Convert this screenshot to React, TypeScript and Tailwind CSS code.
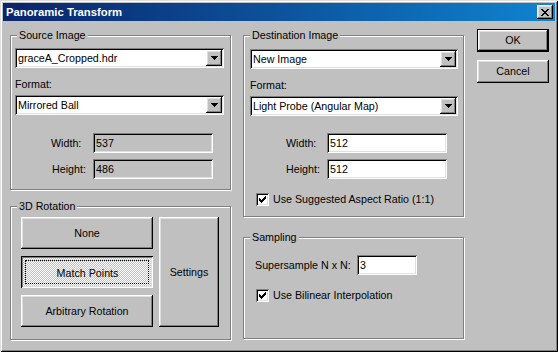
import React from "react";

const raised =
  "shadow-[inset_-1px_-1px_0_#000,inset_1px_1px_0_#fff,inset_-2px_-2px_0_#808080,inset_2px_2px_0_#dfdfdf]";
const pressed =
  "shadow-[inset_1px_1px_0_#000,inset_-1px_-1px_0_#fff,inset_2px_2px_0_#808080,inset_-2px_-2px_0_#dfdfdf]";
const sunken =
  "shadow-[inset_1px_1px_0_#808080,inset_-1px_-1px_0_#fff,inset_2px_2px_0_#000,inset_-2px_-2px_0_#dfdfdf]";

function Group({ label, className, children }: { label: string; className: string; children: React.ReactNode }) {
  return (
    <div className={`relative border border-[#808080] shadow-[1px_1px_0_#fff,inset_1px_1px_0_#fff] ${className}`}>
      <span className="absolute left-[6px] top-[-7px] bg-[#c0c0c0] px-[2px] leading-[13px]">{label}</span>
      {children}
    </div>
  );
}

function Combo({ value, width }: { value: string; width: string }) {
  return (
    <div className={`flex h-[20px] items-center bg-white p-[2px] ${sunken} ${width}`}>
      <span className="flex-1 pl-[1px] leading-[13px]">{value}</span>
      <div className={`flex h-[16px] w-[16px] items-center justify-center bg-[#c0c0c0] ${raised}`}>
        <svg width="7" height="4" viewBox="0 0 7 4" shapeRendering="crispEdges">
          <path d="M0 0h7v1h-7z M1 1h5v1h-5z M2 2h3v1h-3z M3 3h1v1h-1z" fill="#000" />
        </svg>
      </div>
    </div>
  );
}

function Field({ value, width, readOnly }: { value: string; width: string; readOnly?: boolean }) {
  return (
    <div className={`flex h-[20px] items-center pl-[3px] leading-[13px] ${sunken} ${width} ${readOnly ? "bg-[#c0c0c0]" : "bg-white"}`}>
      {value}
    </div>
  );
}

function Check({ label }: { label: string }) {
  return (
    <div className="flex items-center gap-[4px]">
      <div className={`flex h-[13px] w-[13px] items-center justify-center bg-white ${sunken}`}>
        <svg width="7" height="7" viewBox="0 0 7 7" shapeRendering="crispEdges">
          <path
            d="M6 0h1v1h-1z M5 1h2v1h-2z M0 2h1v1h-1z M4 2h3v1h-3z M0 3h2v1h-2z M3 3h3v1h-3z M0 4h5v1h-5z M1 5h3v1h-3z M2 6h1v1h-1z"
            fill="#000"
          />
        </svg>
      </div>
      <span className="leading-[13px]">{label}</span>
    </div>
  );
}

function Btn({ children, className }: { children: React.ReactNode; className: string }) {
  return <div className={`flex items-center justify-center bg-[#c0c0c0] ${raised} ${className}`}>{children}</div>;
}

export default function App() {
  return (
    <div className="h-[352px] w-[558px] bg-[#c0c0c0] p-[3px] font-['Liberation_Sans',Arial,sans-serif] text-[10.7px] text-black shadow-[inset_1px_1px_0_#dfdfdf,inset_-1px_-1px_0_#000,inset_2px_2px_0_#fff,inset_-2px_-2px_0_#808080]">
      <div className="flex h-[18px] items-center justify-between bg-gradient-to-r from-[#0a246a] to-[#1084d0] pl-[3px] pr-[2px]">
        <span className="text-[11.3px] font-bold leading-[13px] text-white">Panoramic Transform</span>
        <div className={`flex h-[14px] w-[16px] items-center justify-center bg-[#c0c0c0] ${raised}`}>
          <svg width="8" height="7" viewBox="0 0 8 7" shapeRendering="crispEdges">
            <path
              d="M0 0h2v1h-2z M6 0h2v1h-2z M1 1h2v1h-2z M5 1h2v1h-2z M2 2h4v1h-4z M3 3h2v1h-2z M2 4h4v1h-4z M1 5h2v1h-2z M5 5h2v1h-2z M0 6h2v1h-2z M6 6h2v1h-2z"
              fill="#000"
            />
          </svg>
        </div>
      </div>

      <div className="flex pl-[7px] pt-[14px]">
        {/* left column */}
        <div className="flex w-[221px] flex-col">
          <Group label="Source Image" className="h-[155px] pl-[4px] pt-[12px]">
            <Combo value="graceA_Cropped.hdr" width="w-[209px]" />
            <div className="mt-[10px] leading-[13px]">Format:</div>
            <div className="mt-[4px]">
              <Combo value="Mirrored Ball" width="w-[209px]" />
            </div>
            <div className="mt-[18px] flex items-center pl-[36px]">
              <span className="w-[42px]">Width:</span>
              <Field value="537" width="w-[120px]" readOnly />
            </div>
            <div className="mt-[6px] flex items-center pl-[37px]">
              <span className="w-[41px]">Height:</span>
              <Field value="486" width="w-[120px]" readOnly />
            </div>
          </Group>

          <Group label="3D Rotation" className="mt-[16px] flex h-[134px] gap-[6px] pl-[10px] pt-[10px]">
            <div className="flex flex-col gap-[7px]">
              <Btn className="h-[32px] w-[132px]">None</Btn>
              <div
                className={`relative flex h-[32px] w-[132px] items-center justify-center bg-[repeating-conic-gradient(#fff_0_25%,#c0c0c0_0_50%)] bg-[length:2px_2px] pt-[2px] pl-[1px] ${pressed}`}
              >
                <span className="bg-transparent">Match Points</span>
                <div className="absolute inset-[4px] border border-dotted border-black" />
              </div>
              <Btn className="h-[32px] w-[132px]">Arbitrary Rotation</Btn>
            </div>
            <Btn className="h-[110px] w-[60px]">Settings</Btn>
          </Group>
        </div>

        {/* right column */}
        <div className="ml-[12px] flex w-[221px] flex-col">
          <Group label="Destination Image" className="h-[182px] pl-[6px] pt-[13px]">
            <Combo value="New Image" width="w-[208px]" />
            <div className="mt-[10px] leading-[13px]">Format:</div>
            <div className="mt-[4px]">
              <Combo value="Light Probe (Angular Map)" width="w-[208px]" />
            </div>
            <div className="mt-[17px] flex items-center pl-[36px]">
              <span className="w-[41px]">Width:</span>
              <Field value="512" width="w-[120px]" />
            </div>
            <div className="mt-[6px] flex items-center pl-[36px]">
              <span className="w-[41px]">Height:</span>
              <Field value="512" width="w-[120px]" />
            </div>
            <div className="mt-[14px] pl-[6px]">
              <Check label="Use Suggested Aspect Ratio (1:1)" />
            </div>
          </Group>

          <Group label="Sampling" className="mt-[20px] h-[102px] pl-[11px] pt-[17px]">
            <div className="flex items-center">
              <span className="w-[102px]">Supersample N x N:</span>
              <Field value="3" width="w-[60px]" />
            </div>
            <div className="mt-[14px] pl-[1px]">
              <Check label="Use Bilinear Interpolation" />
            </div>
          </Group>
        </div>

        {/* buttons */}
        <div className="ml-[13px] flex flex-col pt-[-6px]">
          <div className="-mt-[6px] border border-black">
            <Btn className="h-[21px] w-[70px]">OK</Btn>
          </div>
          <Btn className="mt-[8px] h-[23px] w-[72px]">Cancel</Btn>
        </div>
      </div>
    </div>
  );
}
